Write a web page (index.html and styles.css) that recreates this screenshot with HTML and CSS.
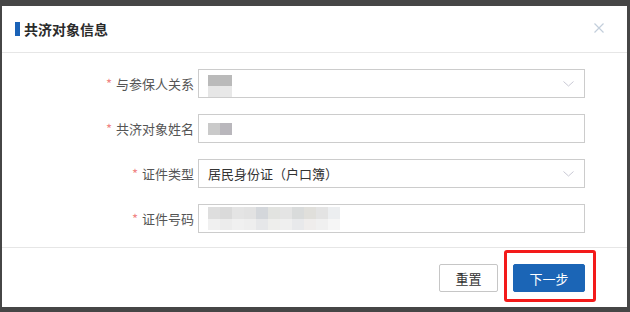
FILE: index.html
```html
<!DOCTYPE html>
<html>
<head>
  <title>共济对象信息</title>
  <link rel="stylesheet" href="styles.css">
</head>
<body>
  <div class="dialog">
    <header class="dialog-header">
      <h3 class="dialog-title">共济对象信息</h3>
      <button class="close-button" aria-label="关闭">
        <svg width="10" height="10" viewBox="0 0 10 10"><path d="M0.5 0.5 L9.5 9.5 M9.5 0.5 L0.5 9.5" stroke="#c3cedb" stroke-width="1.2" fill="none"/></svg>
      </button>
    </header>

    <form class="dialog-body">
      <div class="form-row">
        <label class="form-label"><span class="required">*</span>与参保人关系</label>
        <div class="form-control select">
          <div class="mosaic mosaic-short">
            <span class="cell" style="background:#bababa"></span><span class="cell" style="background:#bababa"></span>
            <span class="cell" style="background:#e6e6e6"></span><span class="cell" style="background:#e8e8e8"></span>
          </div>
          <svg class="chevron" width="11" height="6" viewBox="0 0 11 6"><path d="M0.5 0.5 L5.5 5 L10.5 0.5" stroke="#c8c8d4" stroke-width="1" fill="none"/></svg>
        </div>
      </div>

      <div class="form-row">
        <label class="form-label"><span class="required">*</span>共济对象姓名</label>
        <div class="form-control">
          <div class="mosaic mosaic-name">
            <span class="cell" style="background:#cacaca"></span><span class="cell" style="background:#b9b7bc"></span>
          </div>
        </div>
      </div>

      <div class="form-row">
        <label class="form-label"><span class="required">*</span>证件类型</label>
        <div class="form-control select">
          <span class="value">居民身份证（户口簿）</span>
          <svg class="chevron" width="11" height="6" viewBox="0 0 11 6"><path d="M0.5 0.5 L5.5 5 L10.5 0.5" stroke="#c8c8d4" stroke-width="1" fill="none"/></svg>
        </div>
      </div>

      <div class="form-row">
        <label class="form-label"><span class="required">*</span>证件号码</label>
        <div class="form-control">
          <div class="mosaic mosaic-long" id="id-mosaic"></div>
        </div>
      </div>
    </form>

    <footer class="dialog-footer">
      <button type="button" class="btn btn-default">重置</button>
      <button type="button" class="btn btn-primary">下一步</button>
      <span class="highlight"></span>
    </footer>
  </div>

  <script>
    // blurred id number cells
    var topRow = ["#dedede", "#dadada", "#e4e4e4", "#e2e2e2", "#d4d7db", "#e2e3e0", "#e4e4e4", "#d9dbdb", "#e0dfdb", "#e3e3e3", "#eceef0"];
    var bottomRow = ["#f0f0f0", "#ececec", "#f0f0f0", "#eeeeee", "#e6e7e9", "#eeeeec", "#efefef", "#e8e9eb", "#efedec", "#f0f0f0", "#f6f6f6"];
    var mosaic = document.getElementById("id-mosaic");
    topRow.concat(bottomRow).forEach(function(color) {
      var cell = document.createElement("span");
      cell.className = "cell";
      cell.style.background = color;
      mosaic.appendChild(cell);
    });
  </script>
</body>
</html>
```

FILE: styles.css
```css
body, h3, p {
  margin: 0;
  padding: 0;
}

body {
  background-color: #464646;
  font-family: "Noto Sans CJK SC", "Noto Sans", sans-serif;
  font-size: 13px;
  color: #333;
}

.dialog {
  background-color: #fff;
  margin: 6px 3px 0 2px;
  height: 301px;
  display: flex;
  flex-direction: column;
}

.dialog-header {
  height: 46px;
  padding: 0 23px 0 13px;
  border-bottom: 1px solid #e6e6e6;
  display: flex;
  justify-content: space-between;
  align-items: center;
}

.dialog-title {
  font-size: 14px;
  font-weight: 700;
  color: #2b2b2b;
  line-height: 14px;
  display: flex;
  align-items: center;
  gap: 4px;
}

.dialog-title::before {
  content: "";
  width: 5px;
  height: 14px;
  background-color: #1a62b7;
}

.close-button {
  border: none;
  background: none;
  padding: 0;
  margin-top: -3px;
  display: flex;
  cursor: pointer;
}

.dialog-body {
  padding: 16px 0 14px;
  border-bottom: 1px solid #e6e6e6;
  display: flex;
  flex-direction: column;
  gap: 16px;
}

.form-row {
  display: flex;
  align-items: center;
}

.form-label {
  width: 196px;
  padding-right: 4px;
  box-sizing: border-box;
  text-align: right;
  color: #555;
  font-size: 13px;
}

.required {
  color: #f08585;
  margin-right: 4px;
}

.form-control {
  width: 387px;
  height: 29px;
  box-sizing: border-box;
  border: 1px solid #cccccc;
  display: flex;
  align-items: center;
  padding: 0 10px 0 9px;
  position: relative;
}

.select {
  justify-content: space-between;
}

.value {
  color: #333;
  font-size: 13px;
}

.chevron {
  margin-left: auto;
  margin-top: 1px;
}

.mosaic {
  display: grid;
  grid-template-rows: 11px 11px;
}

.mosaic-short {
  grid-template-columns: 12px 12px;
  grid-template-rows: 11px 11px;
  margin-top: 5px;
}

.mosaic-name {
  grid-template-columns: 12px 12px;
  grid-template-rows: 12px;
}

.mosaic-long {
  grid-template-columns: repeat(11, 12px);
  grid-template-rows: 12px 11px;
}

.dialog-footer {
  flex: 1;
  padding: 16px 42px 0 0;
  display: flex;
  justify-content: flex-end;
  align-items: flex-start;
  gap: 15px;
  position: relative;
}

.btn {
  height: 28px;
  border-radius: 2px;
  font-family: "Noto Sans CJK SC", "Noto Sans", sans-serif;
  font-size: 13px;
  cursor: pointer;
}

.btn-default {
  width: 59px;
  background-color: #fff;
  border: 1px solid #c6c6c6;
  color: #333;
}

.btn-primary {
  width: 72px;
  background-color: #1b65b6;
  border: 1px solid #1b65b6;
  color: #fff;
}

.highlight {
  position: absolute;
  left: 502px;
  top: 2px;
  width: 92px;
  height: 52px;
  box-sizing: border-box;
  border: 3px solid #f31a1a;
  border-radius: 3px;
}
```
